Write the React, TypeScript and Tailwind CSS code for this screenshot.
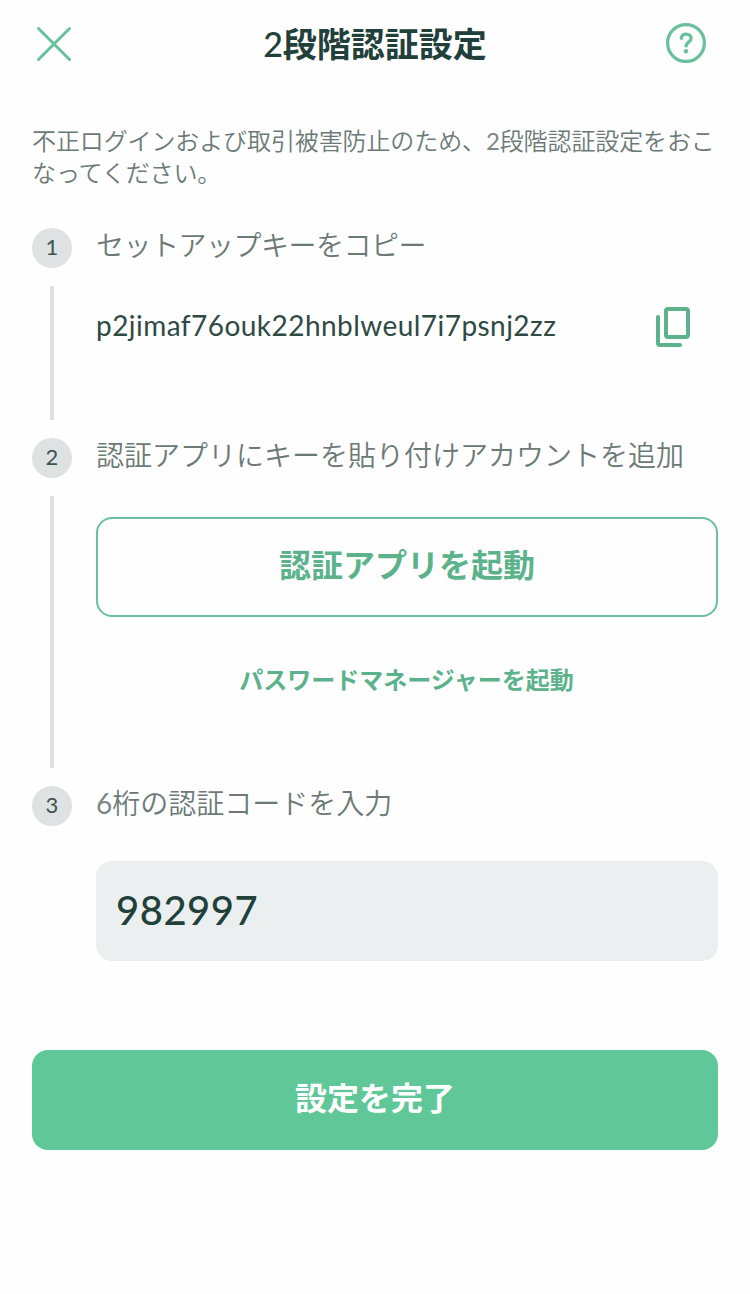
import type { ReactNode } from 'react';

type StepProps = {
  number: number;
  title: ReactNode;
  last?: boolean;
  children: ReactNode;
};

function Step({ number, title, last = false, children }: StepProps) {
  return (
    <li className="flex gap-6">
      <div className="flex w-10 shrink-0 flex-col items-center">
        <span className="flex h-10 w-10 items-center justify-center rounded-full bg-[#dfe2e3] pb-0.5 text-[22px] leading-none text-[#3d534d]">
          {number}
        </span>
        {!last && <span className="my-[18px] w-1 flex-1 bg-[#dfe1e3]" />}
      </div>
      <div className="min-w-0 flex-1">
        <h2 className="h-10 text-[28px] leading-[35px] font-[350] whitespace-nowrap text-[#6c7a76]">{title}</h2>
        {children}
      </div>
    </li>
  );
}

function CloseIcon() {
  return (
    <svg width="40" height="40" viewBox="0 0 40 40" fill="none" stroke="#68c09c" strokeWidth="3" strokeLinecap="round">
      <path d="M4.5 4.5l31 31M35.5 4.5l-31 31" />
    </svg>
  );
}

function HelpIcon() {
  return (
    <svg width="40" height="40" viewBox="0 0 40 40" fill="none" stroke="#68c09c" strokeLinecap="round" strokeLinejoin="round">
      <circle cx="20" cy="20" r="18.4" strokeWidth="3.2" />
      <path d="M15.3 15.2c.3-2.6 2.2-4.1 4.9-4.1 2.9 0 4.9 1.7 4.9 4.2 0 3.8-5 3.9-5 7.6" strokeWidth="3.4" />
      <circle cx="20" cy="28.2" r="2.3" fill="#68c09c" stroke="none" />
    </svg>
  );
}

function CopyIcon() {
  return (
    <svg width="34" height="40" viewBox="0 0 34 40" fill="none" stroke="#5bb28b" strokeWidth="4" strokeLinecap="round" strokeLinejoin="round">
      <rect x="10" y="2" width="22" height="28" rx="2" />
      <path d="M2 10v26a2 2 0 0 0 2 2h20" />
    </svg>
  );
}

export default function App() {
  return (
    <div className="min-h-[1294px] w-[750px] bg-[#fefefe] px-8 font-['Lato','Noto_Sans_CJK_JP',sans-serif] text-[#21403a]" lang="ja">
      <header className="flex h-[88px] items-center justify-between pr-3 pl-0.5">
        <button aria-label="閉じる">
          <CloseIcon />
        </button>
        <h1 className="pl-2.5 text-[34px] leading-10 font-bold">
          <span className="font-medium">2</span>段階認証設定
        </h1>
        <button className="mb-0.5" aria-label="ヘルプ">
          <HelpIcon />
        </button>
      </header>

      <p className="mt-[37px] h-[103px] text-2xl font-[350] tracking-[-0.11px] whitespace-nowrap text-[#6c7a76]">
        不正ログインおよび取引被害防止のため、<span className="font-normal text-[#7b8884]">2</span>段階認証設定をおこ
        <br />
        なってください。
      </p>

      <ol>
        <Step number={1} title={<span className="tracking-[-0.5px]">セットアップキーをコピー</span>}>
          <div className="mt-[39px] flex h-[131px] items-start justify-between pr-7">
            <span className="-mt-0.5 text-[28px] leading-10 tracking-[0.45px] text-[#2f4a44]">
              p2jimaf76ouk22hnblweul7i7psnj2zz
            </span>
            <button aria-label="コピー">
              <CopyIcon />
            </button>
          </div>
        </Step>

        <Step number={2} title="認証アプリにキーを貼り付けアカウントを追加">
          <div className="mt-[39px] flex h-[269px] flex-col">
            <button className="h-[100px] rounded-2xl border-2 border-[#68c09c] pb-1 text-[32px] leading-10 font-bold text-[#5bb28b]">
              認証アプリを起動
            </button>
            <button className="mt-[45px] pr-px text-2xl leading-9 font-bold text-[#5bb28b]">
              パスワードマネージャーを起動
            </button>
          </div>
        </Step>

        <Step
          number={3}
          title={
            <>
              <span className="font-normal text-[#7b8884]">6</span>桁の認証コードを入力
            </>
          }
          last
        >
          <div className="mt-[35px] flex h-[100px] items-center rounded-2xl bg-[#ebeff0] px-5 pb-0.5 text-[40px] leading-none font-medium tracking-[0.5px]">
            982997
          </div>
        </Step>
      </ol>

      <button className="mt-[89px] h-[100px] w-full rounded-2xl bg-[#60c898] pb-1 text-[32px] leading-10 font-bold text-white">
        設定を完了
      </button>
    </div>
  );
}
